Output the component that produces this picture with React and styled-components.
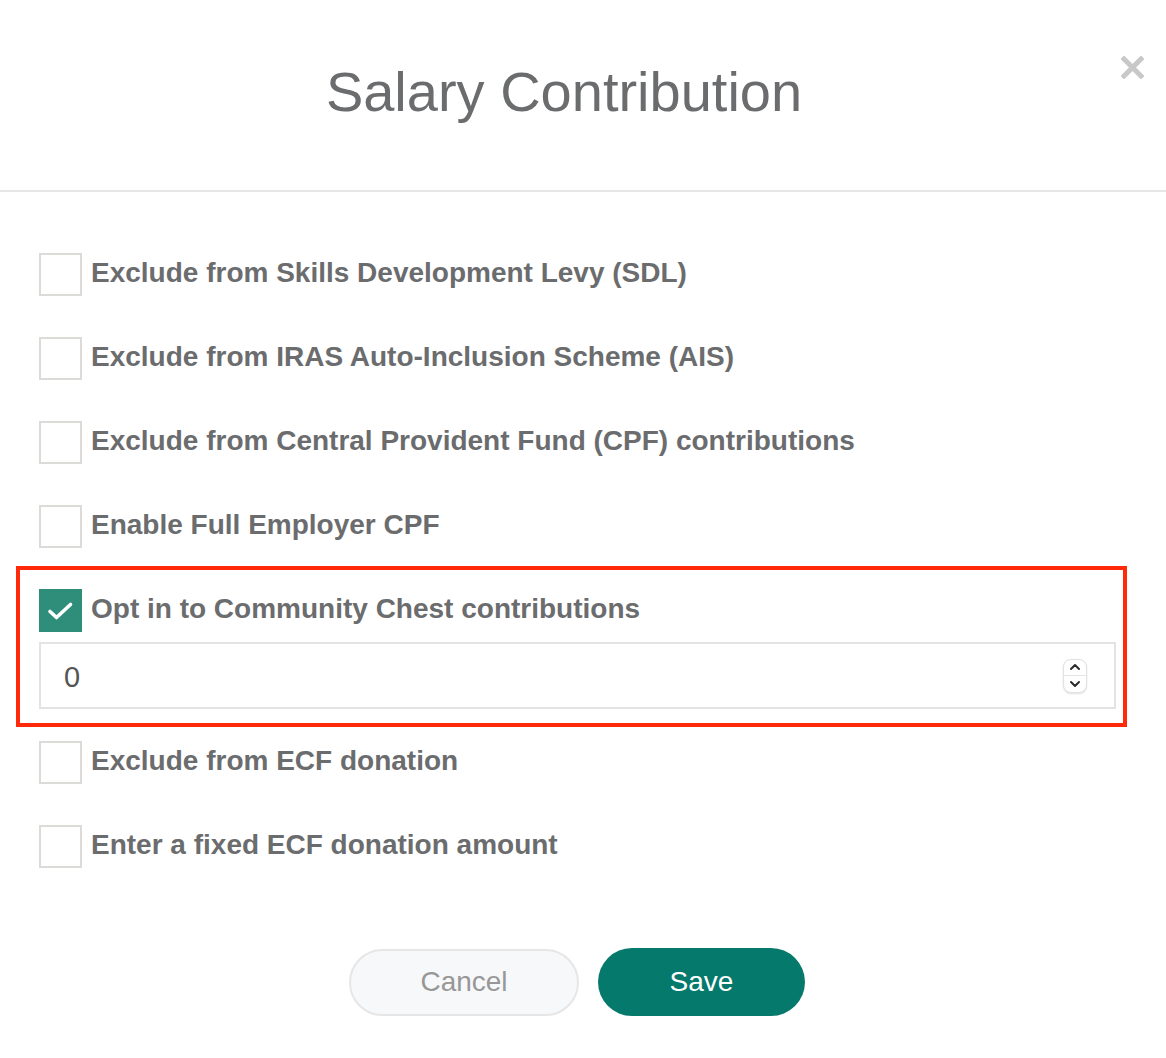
import styled, { createGlobalStyle } from 'styled-components';

const GlobalStyle = createGlobalStyle`
  body {
    margin: 0;
    background: #fff;
    font-family: 'Liberation Sans', Arial, Helvetica, sans-serif;
  }
`;

const options = [
  { id: 'sdl', label: 'Exclude from Skills Development Levy (SDL)' },
  { id: 'ais', label: 'Exclude from IRAS Auto-Inclusion Scheme (AIS)' },
  { id: 'cpf', label: 'Exclude from Central Provident Fund (CPF) contributions' },
  { id: 'full', label: 'Enable Full Employer CPF' },
];

const ecfOptions = [
  { id: 'ecf', label: 'Exclude from ECF donation' },
  { id: 'ecf-fixed', label: 'Enter a fixed ECF donation amount' },
];

const Checkbox = ({ checked }) => (
  <Box checked={checked}>
    {checked && (
      <svg width='43' height='43' viewBox='0 0 43 43'>
        <path
          d='M11 22.5 L17.5 28.5 L31.5 15.5'
          fill='none'
          stroke='#fff'
          strokeWidth='3.6'
          strokeLinecap='round'
          strokeLinejoin='round'
        />
      </svg>
    )}
  </Box>
);

const Option = ({ label, checked, first }) => (
  <Row first={first}>
    <Checkbox checked={checked} />
    <Label>{label}</Label>
  </Row>
);

const App = () => {
  return (
    <>
      <GlobalStyle />
      <Modal>
        <Header>
          <Title>Salary Contribution</Title>
          <Close aria-label='Close'>
            <svg width='23' height='23' viewBox='0 0 23 23'>
              <path
                d='M3 3 L20 20 M20 3 L3 20'
                stroke='#c8c8c8'
                strokeWidth='5'
                strokeLinecap='square'
              />
            </svg>
          </Close>
        </Header>

        <Body>
          {options.map((opt, i) => (
            <Option key={opt.id} label={opt.label} first={i === 0} />
          ))}

          <Highlight>
            <Option label='Opt in to Community Chest contributions' checked first />
            <NumberField>
              <Input type='text' value='0' readOnly />
              <Spinner>
                <SpinHalf>
                  <svg width='12' height='8' viewBox='0 0 12 8'>
                    <path d='M2 6 L6 2 L10 6' fill='none' stroke='#2b2b2b' strokeWidth='2' strokeLinecap='round' strokeLinejoin='round' />
                  </svg>
                </SpinHalf>
                <SpinHalf bottom>
                  <svg width='12' height='8' viewBox='0 0 12 8'>
                    <path d='M2 2 L6 6 L10 2' fill='none' stroke='#2b2b2b' strokeWidth='2' strokeLinecap='round' strokeLinejoin='round' />
                  </svg>
                </SpinHalf>
              </Spinner>
            </NumberField>
          </Highlight>

          {ecfOptions.map((opt) => (
            <Option key={opt.id} label={opt.label} />
          ))}
        </Body>

        <Footer>
          <CancelButton>Cancel</CancelButton>
          <SaveButton>Save</SaveButton>
        </Footer>
      </Modal>
    </>
  );
};

const Modal = styled.div`
  width: 1166px;
  min-height: 1058px;
  background: #fff;
`;

const Header = styled.header`
  position: relative;
  height: 192px;
  box-sizing: border-box;
  padding: 64px 38px 0 0;
  display: flex;
  justify-content: center;
  border-bottom: 2px solid #e6e6e6;
`;

const Title = styled.h1`
  margin: 0;
  font-size: 56px;
  line-height: 56px;
  font-weight: 400;
  color: #6b6c6e;
`;

const Close = styled.button`
  position: absolute;
  top: 56px;
  right: 22px;
  padding: 0;
  border: 0;
  background: none;
  width: 23px;
  height: 23px;
  cursor: pointer;

  svg {
    display: block;
  }
`;

const Body = styled.div`
  display: flex;
  flex-direction: column;
  padding: 61px 51px 0 39px;
`;

const Row = styled.label`
  display: flex;
  align-items: center;
  height: 43px;
  margin-top: ${({ first }) => (first ? '0' : '41px')};
`;

const Box = styled.span`
  flex: none;
  width: 43px;
  height: 43px;
  box-sizing: border-box;
  border: ${({ checked }) => (checked ? 'none' : '2px solid #dddbd7')};
  background: ${({ checked }) => (checked ? '#2e8e7a' : '#fff')};

  svg {
    display: block;
  }
`;

const Label = styled.span`
  margin-left: 9px;
  padding-bottom: 3px;
  font-size: 28px;
  font-weight: 700;
  color: #6b6c6e;
  white-space: nowrap;
`;

const Highlight = styled.div`
  margin: 18px -12px 0 -23px;
  padding: 19px 7px 14px 19px;
  border: 4px solid #ff2a0a;
  display: flex;
  flex-direction: column;

  & + ${Row} {
    margin-top: 14px;
  }
`;

const NumberField = styled.div`
  margin-top: 10px;
  height: 67px;
  box-sizing: border-box;
  border: 2px solid #e3e3e3;
  display: flex;
  align-items: center;
  padding: 0 27px 0 23px;
`;

const Input = styled.input`
  flex: 1;
  border: 0;
  outline: none;
  padding: 0;
  margin-top: 4px;
  font-family: inherit;
  font-size: 29px;
  color: #555;
  background: transparent;
`;

const Spinner = styled.div`
  width: 24px;
  height: 34px;
  box-sizing: border-box;
  border: 1px solid #e2e2e2;
  border-radius: 8px;
  box-shadow: 0 1px 2px rgba(0, 0, 0, 0.12);
  display: flex;
  flex-direction: column;
  background: #fff;
`;

const SpinHalf = styled.div`
  flex: 1;
  display: flex;
  align-items: center;
  justify-content: center;
  border-top: ${({ bottom }) => (bottom ? '1px solid #e4e4e4' : 'none')};

  svg {
    display: block;
  }
`;

const Footer = styled.div`
  display: flex;
  justify-content: center;
  align-items: center;
  gap: 19px;
  margin: 80px 51px 0 39px;
`;

const CancelButton = styled.button`
  width: 230px;
  height: 67px;
  border-radius: 34px;
  border: 2px solid #e6e6e6;
  background: #f7f8fa;
  color: #979797;
  font-family: inherit;
  font-size: 28px;
  cursor: pointer;
`;

const SaveButton = styled.button`
  width: 207px;
  height: 68px;
  border-radius: 34px;
  border: 0;
  background: #05796b;
  color: #fff;
  font-family: inherit;
  font-size: 28px;
  cursor: pointer;
`;

export default App;
